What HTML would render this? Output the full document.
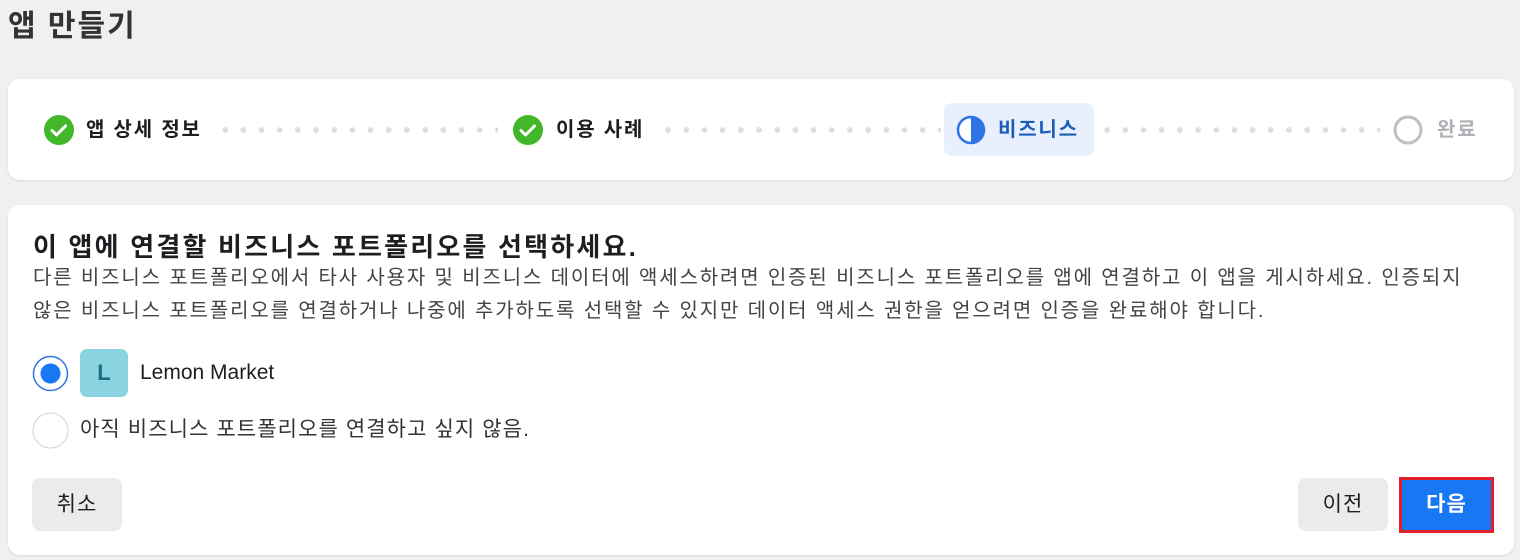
<!DOCTYPE html>
<html><head><meta charset="utf-8"><style>
*{margin:0;padding:0;box-sizing:border-box}
body{width:1520px;height:560px;background:#f0f0f0;font-family:"Liberation Sans","Noto Sans CJK KR",sans-serif;position:relative;overflow:hidden;color:#1c1e21}
.abs{position:absolute}
.card{position:absolute;left:8px;width:1506px;background:#fff;border-radius:12px;box-shadow:0 1px 2px rgba(0,0,0,.1)}
.lbl{position:absolute;top:116px;font-size:20px;font-weight:bold;line-height:28px;white-space:nowrap;letter-spacing:1.8px}
.dots{position:absolute;top:127px;height:6px;background-image:radial-gradient(circle,#dcdde0 2.6px,transparent 3px);background-size:18.2px 6px;background-repeat:repeat-x}
.btn{position:absolute;top:478px;height:53px;border-radius:8px;background:#ebebeb;font-size:21px;text-align:center;line-height:53px;color:#1c1e21;letter-spacing:1px}
</style></head><body>
<div class="abs" style="left:8px;top:7px;font-size:30px;font-weight:bold;color:#333;line-height:40px;letter-spacing:2px">앱 만들기</div>
<div class="card" style="top:79px;height:101px"></div>
<svg class="abs" style="left:43px;top:114px" width="32" height="32"><circle cx="16" cy="16" r="15" fill="#42b72a"/><path d="M9 16.5l4.5 4.5 9-9" stroke="#fff" stroke-width="3" fill="none" stroke-linecap="round" stroke-linejoin="round"/></svg>
<div class="lbl" style="left:86px">앱 상세 정보</div>
<div class="dots" style="left:216px;width:282px"></div>
<svg class="abs" style="left:512px;top:114px" width="32" height="32"><circle cx="16" cy="16" r="15" fill="#42b72a"/><path d="M9 16.5l4.5 4.5 9-9" stroke="#fff" stroke-width="3" fill="none" stroke-linecap="round" stroke-linejoin="round"/></svg>
<div class="lbl" style="left:556px">이용 사례</div>
<div class="dots" style="left:659px;width:282px"></div>
<div class="abs" style="left:944px;top:103px;width:150px;height:53px;background:#e7f0fc;border-radius:8px"></div>
<svg class="abs" style="left:955px;top:114px" width="32" height="32"><circle cx="16" cy="16" r="13" fill="#fff" stroke="#2d74e6" stroke-width="2.5"/><path d="M16 3a13 13 0 0 1 0 26z" fill="#2d74e6"/></svg>
<div class="lbl" style="left:998px;color:#1b5cb8">비즈니스</div>
<div class="dots" style="left:1098px;width:282px"></div>
<svg class="abs" style="left:1392px;top:114px" width="32" height="32"><circle cx="16" cy="16" r="13" fill="#fff" stroke="#bcc0c4" stroke-width="3"/></svg>
<div class="lbl" style="left:1437px;color:#aeb1b5">완료</div>

<div class="card" style="top:205px;height:350px"></div>
<div class="abs" style="left:33px;top:230px;font-size:26px;font-weight:bold;line-height:34px;letter-spacing:2.2px;white-space:nowrap">이 앱에 연결할 비즈니스 포트폴리오를 선택하세요.</div>
<div class="abs" style="left:33px;top:262px;font-size:20px;line-height:33px;color:#444;letter-spacing:1.85px;white-space:nowrap">다른 비즈니스 포트폴리오에서 타사 사용자 및 비즈니스 데이터에 액세스하려면 인증된 비즈니스 포트폴리오를 앱에 연결하고 이 앱을 게시하세요. 인증되지<br>않은 비즈니스 포트폴리오를 연결하거나 나중에 추가하도록 선택할 수 있지만 데이터 액세스 권한을 얻으려면 인증을 완료해야 합니다.</div>
<svg class="abs" style="left:32px;top:355px" width="37" height="37"><circle cx="18.5" cy="18.5" r="17" fill="#fff" stroke="#2d74e6" stroke-width="1.5"/><circle cx="18.5" cy="18.5" r="10" fill="#1877f2"/></svg>
<div class="abs" style="left:80px;top:349px;width:48px;height:48px;border-radius:7px;background:#8ad4e2;color:#1d6a85;font-weight:bold;font-size:22px;text-align:center;line-height:48px">L</div>
<div class="abs" style="left:140px;top:359px;font-size:21px;line-height:28px">Lemon Market</div>
<svg class="abs" style="left:32px;top:412px" width="37" height="37"><circle cx="18.5" cy="18.5" r="17.5" fill="#fff" stroke="#d0d2d5" stroke-width="1"/></svg>
<div class="abs" style="left:80px;top:416px;font-size:21px;line-height:28px;color:#333;letter-spacing:1.1px;white-space:nowrap">아직 비즈니스 포트폴리오를 연결하고 싶지 않음.</div>
<div class="btn" style="left:32px;width:90px">취소</div>
<div class="btn" style="left:1298px;width:90px">이전</div>
<div class="abs" style="left:1399px;top:477px;width:95px;height:56px;border:3px solid #e0202a;background:#1877f2;color:#fff;font-weight:bold;font-size:21px;text-align:center;line-height:50px;letter-spacing:1px">다음</div>
</body></html>
